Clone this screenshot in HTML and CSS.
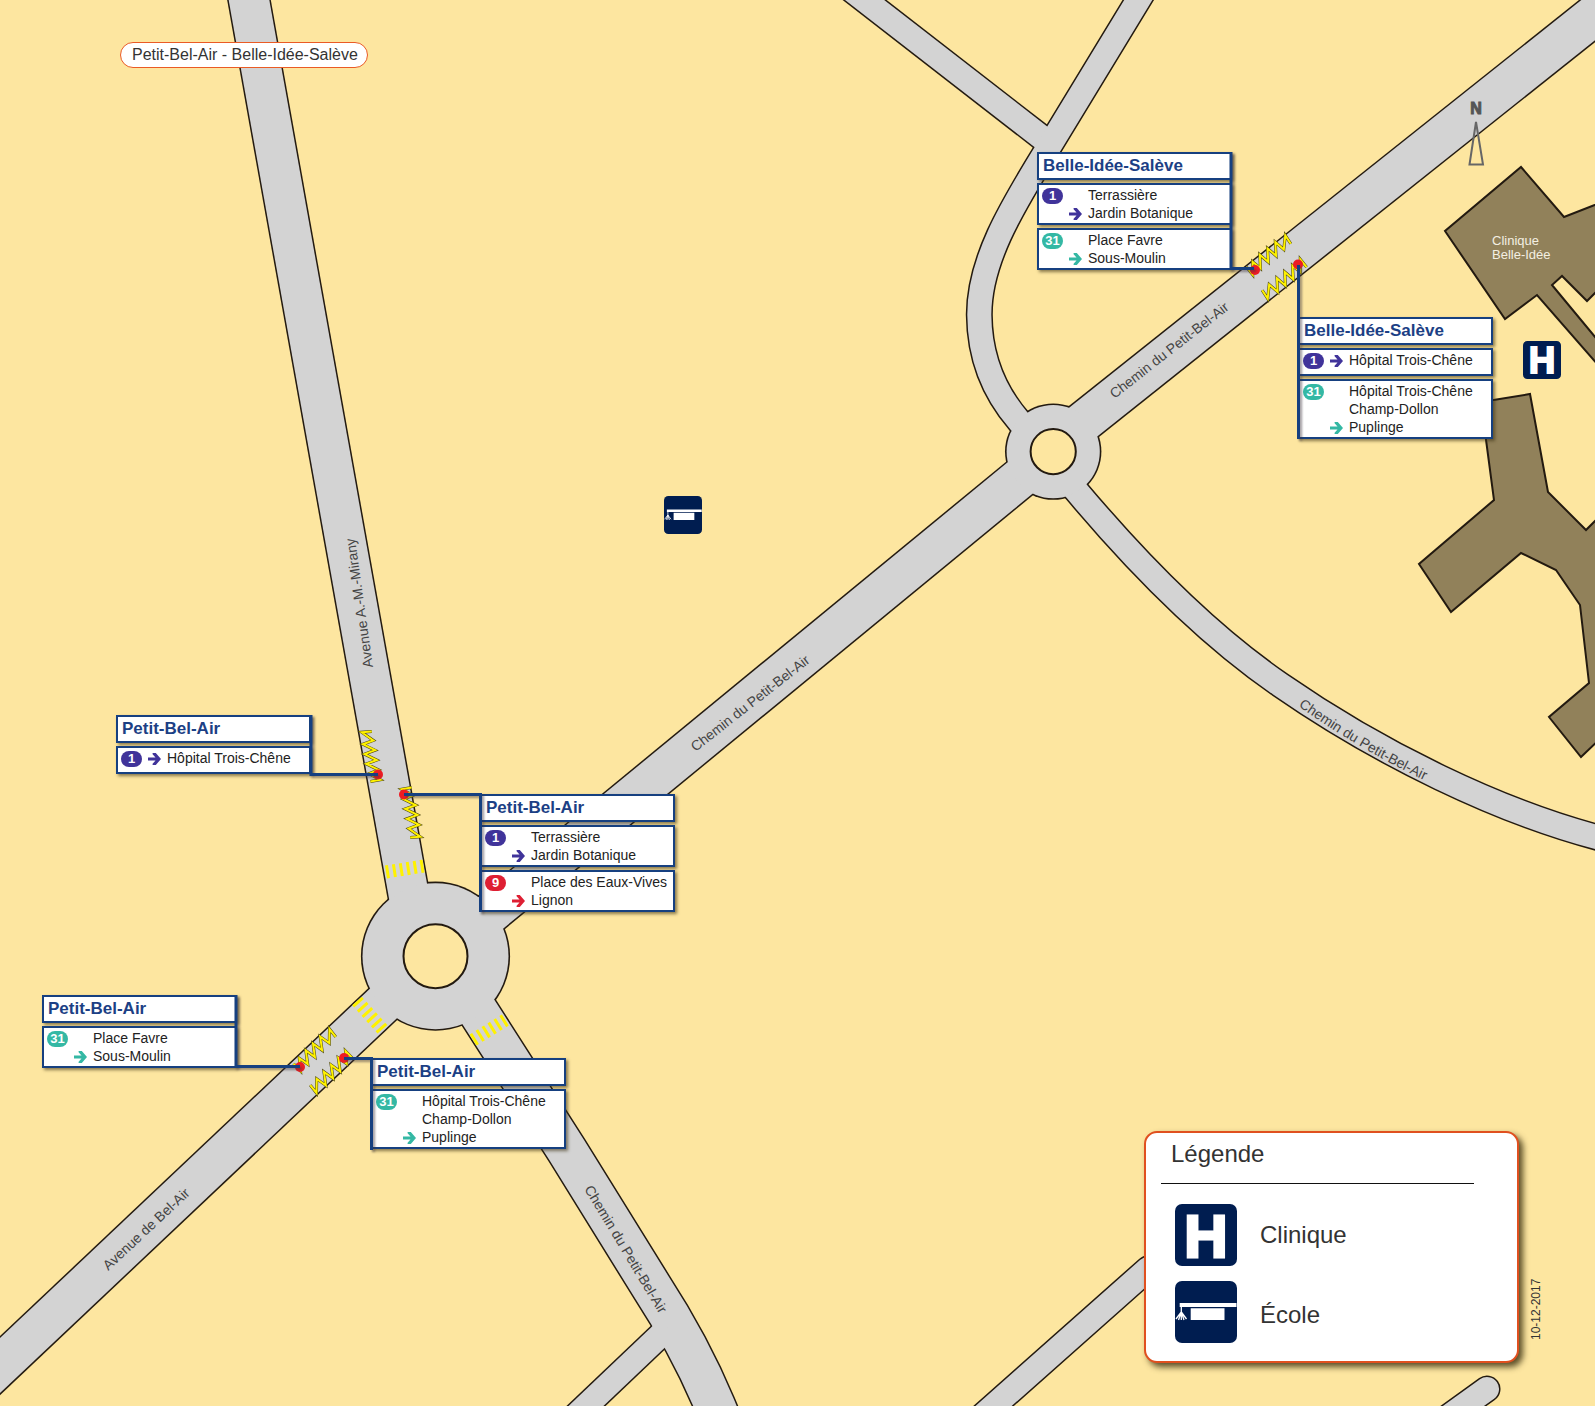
FILE: index.html
```html
<!DOCTYPE html>
<html lang="fr">
<head>
<meta charset="utf-8">
<title>Petit-Bel-Air - Belle-Idée-Salève</title>
<link rel="stylesheet" href="styles.css">
</head>
<body>
<svg class="defs" width="0" height="0" aria-hidden="true">
  <defs>
    <symbol id="clinic" viewBox="0 0 62 62">
      <rect width="62" height="62" rx="7" fill="#001d50"/>
      <text class="clinic-letter" x="31" y="53">H</text>
    </symbol>
    <symbol id="school" viewBox="0 0 62 62">
      <rect width="62" height="62" rx="7" fill="#001d50"/>
      <path d="M4.700 22H61.500V26H4.700zM15.700 27.300H49.500V39H15.700z" fill="#fff"/>
      <path d="M6.300 25V39M6.300 31L1 38M6.300 31L11.500 38M6.300 31L3.500 39M6.300 31L9 39" fill="none" stroke="#fff" stroke-width="1.300"/>
    </symbol>
    <symbol id="arrow" viewBox="0 0 13 12">
      <path d="M0 4.500H7.500L4.600 1.300V0H7.800L13 6L7.800 12H4.600V10.700L7.500 7.500H0z" fill="currentColor"/>
    </symbol>
    <g id="zigzag">
      <path class="zigzag-edge" d="M-25 -5V5L-17 -5L-15 5L-7 -6L-5 5L3 -6L5 5L13 -6L15 5L25 -5L24 5"/>
      <path class="zigzag-fill" d="M-25 -5V5L-17 -5L-15 5L-7 -6L-5 5L3 -6L5 5L13 -6L15 5L25 -5L24 5"/>
    </g>
    <g id="roads">
      <path class="wide" d="M247.200 -10L418 947"/>
      <path class="wide" d="M435 958.700L1053 451"/>
      <path class="wide" d="M1053 446.100L1620 -5.200"/>
      <path class="wide" d="M-20 1384.500L430 959.500"/>
      <path class="wide" d="M440 952L566.700 1150L651 1286Q690 1346 715 1406L720 1418"/>
      <path class="narrow" d="M845 -15.200L1045 140"/>
      <path class="narrow" d="M1147.400 -15L1047 150C1010 210 979 262 979.300 315C979.600 355 993 391 1019 421L1030 433"/>
      <path class="narrow" d="M1060 472L1076.500 491C1132 557 1205 633 1280 684.600C1380 754 1500 812 1600 838"/>
      <path class="narrow" d="M566 1425L668 1328"/>
      <path class="narrow capped" d="M971 1426L1148 1269"/>
      <path class="narrow capped" d="M1437 1425L1487 1389"/>
    </g>
  </defs>
</svg>

<main class="map">
  <svg class="layer" width="1595" height="1406" viewBox="0 0 1595 1406">
    <g class="building">
      <path d="M1521 167L1564 217L1605 201V283L1587 301L1562 276L1552 285L1605 349V373L1537 295L1505 319L1445 231Z"/>
      <path d="M1481 402L1530 394L1548 492L1586 530L1605 511V734L1581 757L1549 717L1589 683L1580 605L1556 570L1521 553L1451 612L1419 564L1494 500Z"/>
    </g>
    <g class="road-edge">
      <use href="#roads"/>
      <circle cx="435.500" cy="956.200" r="74.600"/>
      <circle cx="1053.200" cy="451.600" r="48.200"/>
    </g>
    <g class="road-fill">
      <use href="#roads"/>
      <circle cx="435.500" cy="956.200" r="73"/>
      <circle cx="1053.200" cy="451.600" r="46.600"/>
    </g>
    <g class="island">
      <circle cx="435.500" cy="956.200" r="32"/>
      <circle cx="1053.200" cy="451.600" r="22.600"/>
    </g>
    <g class="crossing">
      <path d="M386 872L424 866"/>
      <path d="M357 1001L384 1031"/>
      <path d="M473 1040L507 1019"/>
    </g>
    <use href="#zigzag" transform="translate(1269 255) rotate(-39)"/>
    <use href="#zigzag" transform="translate(1284 279) rotate(141)"/>
    <use href="#zigzag" transform="translate(371 756) rotate(260)"/>
    <use href="#zigzag" transform="translate(411 813) rotate(80)"/>
    <use href="#zigzag" transform="translate(315 1050) rotate(-44)"/>
    <use href="#zigzag" transform="translate(331 1072) rotate(136)"/>
    <g class="street">
      <text transform="translate(1169 350) rotate(-38)" dy="5">Chemin du Petit-Bel-Air</text>
      <text transform="translate(750 703) rotate(-38)" dy="5">Chemin du Petit-Bel-Air</text>
      <text transform="translate(626 1249) rotate(59)" dy="5">Chemin du Petit-Bel-Air</text>
      <text transform="translate(359 603) rotate(-98)" dy="5">Avenue A.-M.-Mirany</text>
      <text transform="translate(146 1229) rotate(-43)" dy="5">Avenue de Bel-Air</text>
      <path id="curve" d="M1297 705Q1355 747 1426 781" fill="none"/>
      <text><textPath href="#curve" startOffset="50%">Chemin du Petit-Bel-Air</textPath></text>
    </g>
    <g class="place">
      <text x="1492" y="245">Clinique</text>
      <text x="1492" y="259">Belle-Idée</text>
    </g>
    <text class="north" x="1476" y="114">N</text>
    <path d="M1476 122L1469.500 164.500H1483Z" fill="none" stroke="#666" stroke-width="2"/>
    <use href="#clinic" x="1523" y="341" width="38" height="38"/>
    <use href="#school" x="664" y="496" width="38" height="38"/>
    <text class="date" transform="translate(1540 1340) rotate(-90)">10-12-2017</text>
  </svg>

  <h1 class="title">Petit-Bel-Air - Belle-Idée-Salève</h1>

  <article class="sign" style="left:1037px;top:152px">
    <h2>Belle-Idée-Salève</h2>
    <section class="line l1"><b>1</b><svg><use href="#arrow"/></svg><p>Terrassière<br>Jardin Botanique</p></section>
    <section class="line l31"><b>31</b><svg><use href="#arrow"/></svg><p>Place Favre<br>Sous-Moulin</p></section>
  </article>
  <article class="sign" style="left:1298px;top:317px">
    <h2>Belle-Idée-Salève</h2>
    <section class="line l1"><b>1</b><svg><use href="#arrow"/></svg><p>Hôpital Trois-Chêne</p></section>
    <section class="line l31"><b>31</b><svg><use href="#arrow"/></svg><p>Hôpital Trois-Chêne<br>Champ-Dollon<br>Puplinge</p></section>
  </article>
  <article class="sign" style="left:116px;top:715px">
    <h2>Petit-Bel-Air</h2>
    <section class="line l1"><b>1</b><svg><use href="#arrow"/></svg><p>Hôpital Trois-Chêne</p></section>
  </article>
  <article class="sign" style="left:480px;top:794px">
    <h2>Petit-Bel-Air</h2>
    <section class="line l1"><b>1</b><svg><use href="#arrow"/></svg><p>Terrassière<br>Jardin Botanique</p></section>
    <section class="line l9"><b>9</b><svg><use href="#arrow"/></svg><p>Place des Eaux-Vives<br>Lignon</p></section>
  </article>
  <article class="sign" style="left:42px;top:995px">
    <h2>Petit-Bel-Air</h2>
    <section class="line l31"><b>31</b><svg><use href="#arrow"/></svg><p>Place Favre<br>Sous-Moulin</p></section>
  </article>
  <article class="sign" style="left:371px;top:1058px">
    <h2>Petit-Bel-Air</h2>
    <section class="line l31"><b>31</b><svg><use href="#arrow"/></svg><p>Hôpital Trois-Chêne<br>Champ-Dollon<br>Puplinge</p></section>
  </article>

  <svg class="layer" width="1595" height="1406" viewBox="0 0 1595 1406" aria-hidden="true">
    <g fill="#ec1c24">
      <circle cx="1255" cy="270" r="5"/>
      <circle cx="1298" cy="264.500" r="5"/>
      <circle cx="378" cy="774.500" r="5"/>
      <circle cx="404" cy="794.500" r="5"/>
      <circle cx="300" cy="1067" r="5"/>
      <circle cx="344" cy="1058" r="5"/>
    </g>
    <g class="leader">
      <path d="M1231 152V268.500H1254"/>
      <path d="M1298.500 265V439"/>
      <path d="M311 715V774.500H378"/>
      <path d="M404 794.500H480.500V912"/>
      <path d="M236 995V1066.500H300"/>
      <path d="M344 1058.500H371.500V1150"/>
    </g>
  </svg>

  <aside class="legend">
    <h2>Légende</h2>
    <ul>
      <li><svg><use href="#clinic"/></svg>Clinique</li>
      <li><svg><use href="#school"/></svg><span>École</span></li>
    </ul>
  </aside>
</main>
</body>
</html>
```
FILE: styles.css
```css
* { box-sizing: border-box; }

body {
  margin: 0;
  background: #fde6a0;
  color: #222;
  font-family: "Liberation Sans", Arial, sans-serif;
}

h1, h2, p, ul { margin: 0; padding: 0; font-weight: normal; }

.defs { position: absolute; }

/* The map is a free canvas: signs and pins sit at their map positions. */
.map {
  position: relative;
  min-height: 100vh;
  overflow: hidden;
}
.layer { display: block; }
.layer ~ .layer { position: absolute; left: 0; top: 0; }

/* Roads */
.road-edge { --wide: 43px; --narrow: 27px; stroke: #231a10; fill: none; }
.road-edge circle { fill: #231a10; stroke: none; }
.road-fill { --wide: 40px; --narrow: 24px; stroke: #d3d3d3; fill: none; }
.road-fill circle { fill: #d3d3d3; stroke: none; }
.wide { stroke-width: var(--wide); }
.narrow { stroke-width: var(--narrow); }
.capped { stroke-linecap: round; }
.island circle { fill: #fde6a0; stroke: #231a10; stroke-width: 2px; }
.building path { fill: #91815a; stroke: #231a10; stroke-width: 2px; }
.crossing path { stroke: #fff200; stroke-width: 13px; stroke-dasharray: 3 4; }
.zigzag-edge { fill: none; stroke: #4a4410; stroke-width: 3px; }
.zigzag-fill { fill: none; stroke: #fff200; stroke-width: 2px; }

/* Map lettering */
.street text { font-size: 14px; fill: #444; text-anchor: middle; }
.place text { font-size: 13px; fill: #f4efe2; }
.north { font-size: 16px; font-weight: bold; fill: #555; stroke: #555; text-anchor: middle; }
.date { font-size: 12px; fill: #333; }
.clinic-letter {
  font-size: 60px;
  font-weight: bold;
  fill: #fff;
  stroke: #fff;
  stroke-width: 3px;
  text-anchor: middle;
}

.title {
  position: absolute;
  left: 120px;
  top: 42px;
  padding: 0 9px 0 11px;
  border: 1px solid #ea5b25;
  border-radius: 13px;
  background: #fff;
  color: #333;
  font-size: 16px;
  line-height: 24px;
}

/* Stop signs */
.sign {
  position: absolute;
  display: grid;
  gap: 3px;
  width: 195px;
}
.sign h2, .line {
  border: 2px solid #164080;
  background: #fff;
  box-shadow: 2px 2px 3px rgba(60, 50, 20, .6);
}
.sign h2 {
  height: 28px;
  padding-left: 4px;
  color: #1c3f85;
  font-size: 17px;
  font-weight: bold;
  line-height: 24px;
}
.line {
  display: grid;
  grid-template-columns: 21px 13px auto;
  align-content: start;
  column-gap: 6px;
  min-height: 28px;
  padding: 1px 0 1px 3px;
  font-size: 14px;
  line-height: 18px;
  white-space: nowrap;
}
.line b {
  height: 16px;
  margin-top: 2px;
  border-radius: 8px;
  background: currentColor;
  font-size: 13px;
  line-height: 16px;
  text-align: center;
  -webkit-text-fill-color: #fff;
}
.line svg { align-self: end; width: 13px; height: 12px; margin-bottom: 2px; }
.line p { color: #222; }
.l1 { color: #40339a; }
.l31 { color: #34b8a4; }
.l9 { color: #de1f33; }

.leader {
  fill: none;
  stroke: #164080;
  stroke-width: 3px;
  filter: drop-shadow(2px 2px 1px rgba(60, 50, 60, .5));
}

/* Legend */
.legend {
  position: absolute;
  left: 1144px;
  top: 1131px;
  width: 375px;
  padding: 7px 43px 18px 15px;
  border: 2px solid #e0501f;
  border-radius: 13px;
  background: #fff;
  box-shadow: 4px 4px 6px rgba(50, 40, 10, .8);
  color: #333;
  font-size: 24px;
}
.legend h2 {
  padding: 0 10px 15px;
  border-bottom: 1px solid #111;
  font-size: 24px;
  line-height: 28px;
}
.legend ul {
  display: grid;
  gap: 15px;
  padding: 20px 14px 0;
  list-style: none;
}
.legend li { display: flex; align-items: center; gap: 23px; }
.legend li svg { width: 62px; height: 62px; }
.legend li span { padding-top: 6px; }
```
